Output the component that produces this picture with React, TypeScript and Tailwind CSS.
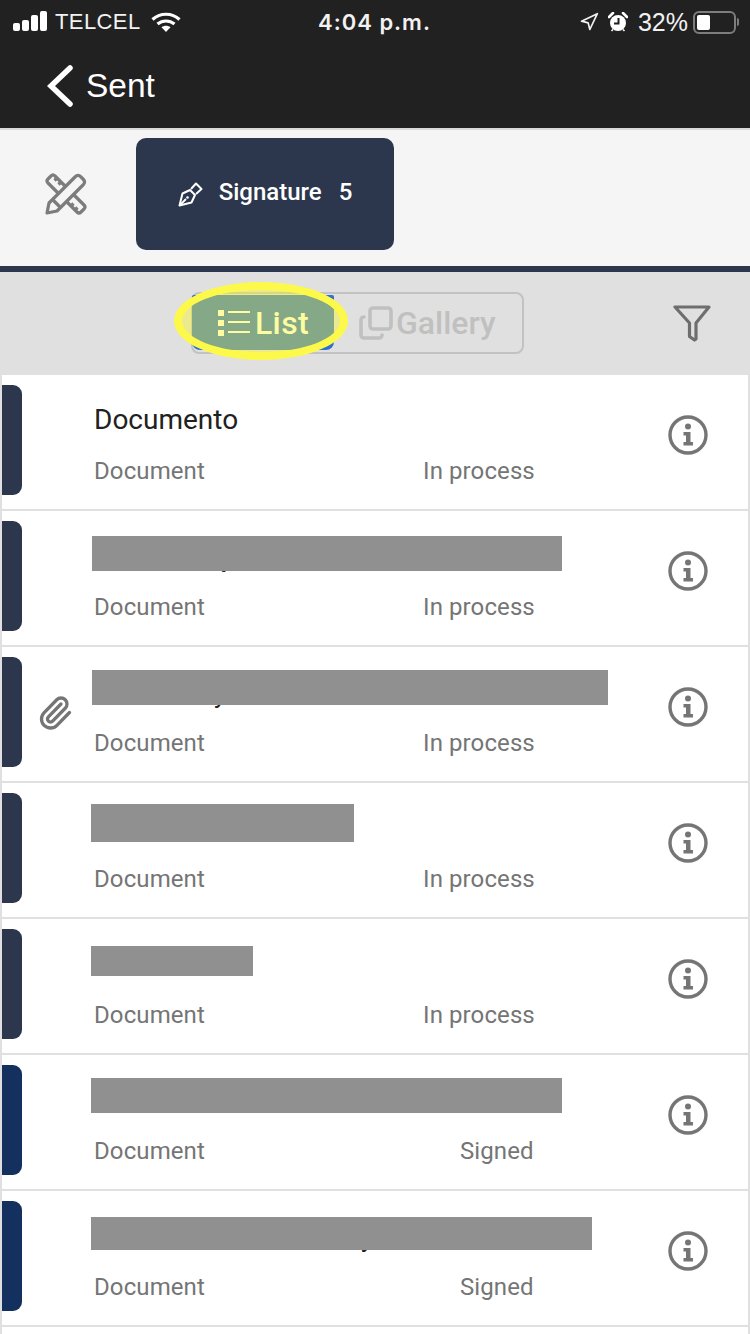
import React from 'react';
import { Paperclip, Copy, Navigation } from 'lucide-react';

interface Row {
  title?: string;
  status: string;
  barColor: string;
  redact?: string;
  peek?: string;
  clip?: boolean;
}

const rows: Row[] = [
  { title: 'Documento', status: 'In process', barColor: 'bg-[#2c374d]' },
  { status: 'In process', barColor: 'bg-[#2c374d]', redact: 'left-0 top-[25px] w-[470px] h-[35px]', peek: 'ml-[127px]' },
  { status: 'In process', barColor: 'bg-[#2c374d]', redact: 'left-0 top-[23px] w-[516px] h-[35px]', peek: 'ml-[120px]', clip: true },
  { status: 'In process', barColor: 'bg-[#2c374d]', redact: '-left-px top-[21px] w-[263px] h-[38px]' },
  { status: 'In process', barColor: 'bg-[#2c374d]', redact: '-left-px top-[27px] w-[162px] h-[30px]' },
  { status: 'Signed', barColor: 'bg-[#14305f]', redact: '-left-px top-[23px] w-[471px] h-[35px]' },
  { status: 'Signed', barColor: 'bg-[#14305f]', redact: '-left-px top-[26px] w-[501px] h-[33px]', peek: 'ml-[267px]' },
];

const WifiGlyph = () => (
  <svg width="30" height="22" viewBox="0 0 30 22" fill="none" stroke="white" strokeWidth="3.2">
    <path d="M1.500 8.500C9 1.500 21 1.500 28.500 8.500" />
    <path d="M6.500 13C11.500 9 18.500 9 23.500 13" />
    <path d="M15 21l-4.500-4.800c2.700-2 6.300-2 9 0z" fill="white" stroke="none" />
  </svg>
);

const AlarmGlyph = () => (
  <svg width="20" height="20" viewBox="0 0 20 20">
    <circle cx="10" cy="11" r="8" fill="white" />
    <path d="M1 5l4-4M19 5l-4-4" stroke="white" strokeWidth="2.600" strokeLinecap="round" />
    <path d="M3.500 19l1.500-1.500M16.500 19L15 17.500" stroke="white" strokeWidth="1.600" />
    <path d="M10.500 6v5.500H6" fill="none" stroke="#212121" strokeWidth="2" />
  </svg>
);

const ChevronGlyph = () => (
  <svg width="26" height="42" viewBox="0 0 26 42" fill="none" stroke="white" strokeWidth="5.500" strokeLinecap="round" strokeLinejoin="miter">
    <path d="M23 3L4 21l19 18" />
  </svg>
);

const InfoGlyph = () => (
  <svg width="40" height="40" viewBox="0 0 40 40" fill="none" className="text-[#757575]">
    <circle cx="20" cy="20" r="18" stroke="currentColor" strokeWidth="3.400" />
    <circle cx="20" cy="11.500" r="3" fill="currentColor" />
    <path d="M15.500 17h7v10h2.500v3.500H15.500V27H18v-6.500h-2.500z" fill="currentColor" />
  </svg>
);

const ToolsGlyph = () => (
  <svg width="42" height="42" viewBox="0 0 42 42" fill="none" stroke="#7c7c7c" strokeWidth="3.200" strokeLinejoin="round">
    <path d="M2 40l2-10L30 4c2-2 4-2 6 0l2 2c2 2 2 4 0 6L12 38z" />
    <path d="M7 26l9 9" />
    <path d="M13 20L3 10Q1 8 3 6l3-3Q8 1 10 3l10 10" />
    <path d="M22 29l10 10q2 2 4 0l3-3q2-2 0-4L29 22" />
    <path d="M12 5L9.500 7.500M16 9l-2.500 2.500M26 33l2.500-2.500M30 37l2.500-2.500" />
  </svg>
);

const NibGlyph = () => (
  <svg width="25" height="25" viewBox="0 0 25 25" fill="none" stroke="white" strokeWidth="2" strokeLinejoin="round">
    <path d="M1.500 23.500L4.500 11.500 12 8l5 5-3.500 7.500z" />
    <path d="M13 7l5-5.500 5.500 5.500-5.500 5" />
    <path d="M1.500 23.500L8 17" />
    <circle cx="9.500" cy="15.500" r="1.300" fill="white" stroke="none" />
  </svg>
);

const ListGlyph = () => (
  <svg width="32" height="26" viewBox="0 0 32 26" fill="currentColor">
    <rect x="0" y="0" width="6" height="6" />
    <rect x="0" y="10" width="6" height="6" />
    <rect x="0" y="20" width="6" height="6" />
    <rect x="10" y="1" width="22" height="2" />
    <rect x="10" y="11" width="22" height="2" />
    <rect x="10" y="21" width="22" height="2" />
  </svg>
);

const FunnelGlyph = () => (
  <svg width="38" height="38" viewBox="0 0 38 38" fill="none" stroke="#6e6e6e" strokeWidth="3.200" strokeLinejoin="round">
    <path d="M2 3h34L23 19v16l-1.500 1-5-3.500V19z" />
  </svg>
);

export default function App() {
  return (
    <div className="w-[750px] h-[1334px] overflow-hidden bg-[#e0e0e0] font-['Roboto',sans-serif]">
      <div className="h-[128px] bg-[#212121] text-white flex flex-col font-['Inter',sans-serif]">
        <div className="h-[44px] flex items-center relative pl-[13px] pr-[11px] text-[22px] text-[#f2f2f2]">
          <div className="flex items-end gap-[2px] h-[20px] mb-[3px]">
            <span className="w-[7px] h-[8px] rounded-[2px] bg-white" />
            <span className="w-[7px] h-[11px] rounded-[2px] bg-white" />
            <span className="w-[7px] h-[16px] rounded-[2px] bg-white" />
            <span className="w-[7px] h-[20px] rounded-[2px] bg-white" />
          </div>
          <span className="ml-[8px] font-['Liberation_Sans',sans-serif] tracking-[0.4px] leading-none">TELCEL</span>
          <span className="ml-[10px]"><WifiGlyph /></span>
          <span className="absolute left-[318px] top-[8px] text-[22px] font-semibold tracking-[1px] leading-[28px]">4:04 p.m.</span>
          <div className="ml-auto flex items-center">
            <Navigation size={20} strokeWidth={2} className="mr-[9px]" />
            <AlarmGlyph />
            <span className="ml-[10px] font-['Liberation_Sans',sans-serif] text-[25px] leading-none">32%</span>
            <div className="ml-[5px] w-[43px] h-[23px] border-2 border-[#7d7d7d] rounded-[6px] p-[2px]">
              <div className="w-[13px] h-full bg-white rounded-[2px]" />
            </div>
            <span className="ml-px w-[2px] h-[8px] bg-[#7d7d7d] rounded-r-sm" />
          </div>
        </div>
        <div className="flex items-center h-[84px] pl-[47px]">
          <ChevronGlyph />
          <span className="ml-[13px] text-[33.5px] font-['Liberation_Sans',sans-serif]">Sent</span>
        </div>
      </div>

      <div className="h-[138px] bg-[#f5f5f5] flex items-center border-t-2 border-[#d9d9d9]">
        <div className="ml-[45px] mr-[49px] -mt-[8px]"><ToolsGlyph /></div>
        <div className="-mt-[8px] w-[258px] h-[112px] rounded-[10px] bg-[#2c374d] text-white flex items-center justify-center">
          <NibGlyph />
          <span className="ml-[16px] pb-[4px] text-[24px] font-medium">Signature</span>
          <span className="ml-[17px] pb-[4px] text-[24px] font-medium">5</span>
        </div>
      </div>
      <div className="h-[6px] bg-[#2c374d]" />

      <div className="h-[103px] bg-[#e0e0e0] flex items-center relative">
        <div className="ml-[191px] -mt-[1px] w-[333px] h-[62px] rounded-[8px] border-2 border-[#c2c2c2] flex">
          <div className="-ml-px mt-px mb-[2px] w-[142px] bg-[#2f6fd0] rounded-t-[2px] rounded-b-[8px] flex items-center justify-center text-white pl-[1px]">
            <ListGlyph />
            <span className="ml-[5px] text-[32px] font-medium tracking-[0.4px]">List</span>
          </div>
          <div className="flex items-center text-[#c0c0c0] ml-[24px] gap-[2px]">
            <Copy size={36} strokeWidth={2.4} className="-scale-y-100" />
            <span className="text-[32px] font-medium">Gallery</span>
          </div>
        </div>
        {/* yellow marker drawn over the List tab */}
        <div className="absolute left-[174px] top-[10px] w-[174px] h-[78px] rounded-[50%] border-[8px] border-[#fdf94b] bg-[#fdf920]/42" />
        <div className="absolute left-[673px] top-[32px]"><FunnelGlyph /></div>
      </div>

      <div className="px-[2px]">
        {rows.map((row, i) => (
          <div key={i} className="h-[136px] bg-white border-b-2 border-[#e0e0e0] flex relative">
            <div className={`w-[20px] h-[110px] mt-[10px] rounded-r-[9px] ${row.barColor}`} />
            <div className="w-[70px] flex items-center justify-center shrink-0 pb-[2px]">
              {row.clip && <Paperclip size={36} strokeWidth={2.2} className="text-[#757575] -ml-[4px]" />}
            </div>
            <div className="w-[576px] relative shrink-0 pl-[2px] pt-[27px]">
              <div className="h-[36px] text-[28px] leading-[36px] text-[#212121]">{row.title}</div>
              {row.peek && <span className={`absolute top-[29px] text-[26px] leading-[36px] text-[#212121] ${row.peek}`}>y</span>}
              {row.redact && <div className={`absolute bg-[#909090] ${row.redact}`} />}
              <div className="flex pt-[19px] text-[24px] leading-[28px] tracking-[0.1px] text-[#757575]">
                <span className="w-[329px]">Document</span>
                <span className={row.status === 'Signed' ? 'ml-[37px]' : ''}>{row.status}</span>
              </div>
            </div>
            <div className="flex items-center pb-[14px]"><InfoGlyph /></div>
          </div>
        ))}
        <div className="h-[10px] bg-white" />
      </div>
    </div>
  );
}
